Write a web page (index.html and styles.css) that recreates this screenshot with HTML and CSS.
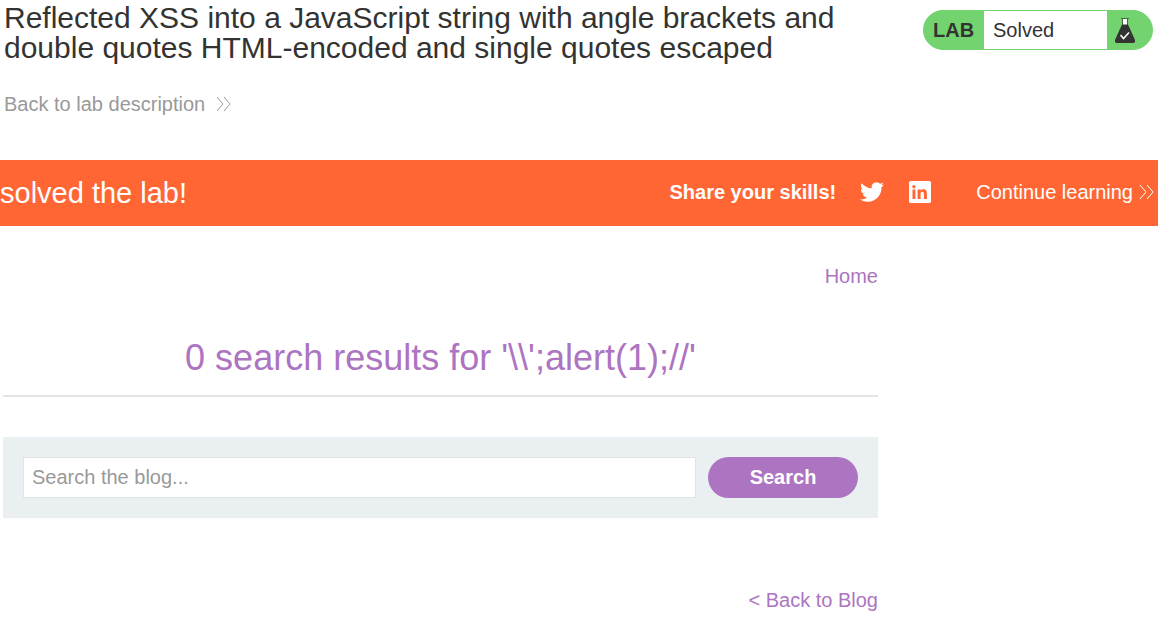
FILE: index.html
```html
<!DOCTYPE html>
<html lang="en">
<head>
<meta charset="utf-8">
<title>Reflected XSS into a JavaScript string</title>
<link rel="stylesheet" href="styles.css">
</head>
<body>
<header class="lab-header">
  <div class="lab-title">
    <h2 class="title">Reflected XSS into a JavaScript string with angle brackets and double quotes HTML-encoded and single quotes escaped</h2>
    <a class="back-link" href="#">Back to lab description
      <svg class="chevrons" viewBox="0 0 15 16" aria-hidden="true"><path d="M1 1l6 7-6 7M8 1l6 7-6 7"/></svg>
    </a>
  </div>
  <div class="lab-status">
    <span class="status-label">LAB</span>
    <p class="status-text">Solved</p>
    <span class="status-icon">
      <svg class="flask" viewBox="0 0 20 25" aria-hidden="true">
        <path fill="#fff" d="M8 1h4v6H8z"/>
        <path fill="#333332" opacity=".7" d="M6 0h8v1h-1v6h-1V1H8v6H7V1H6z"/>
        <path fill="#333332" d="M7 6.500h6l7 15.500q.400 3-2 3H2q-2.400 0-2-3z"/>
        <path fill="none" stroke="#fff" stroke-width="1.500" d="M5.500 17l3 3.500 5.500-6"/>
      </svg>
    </span>
  </div>
</header>
<section class="banner">
  <h4 class="banner-text">solved the lab!</h4>
  <div class="banner-actions">
    <span class="share">Share your skills!</span>
    <a class="social" href="#" aria-label="Twitter"><svg viewBox="0 0 24 24"><path d="M23.950 4.570a10 10 0 0 1-2.820.770 4.960 4.960 0 0 0 2.160-2.720c-.950.550-2 .950-3.130 1.180a4.920 4.920 0 0 0-8.380 4.480C7.690 8.090 4.070 6.130 1.640 3.160a4.820 4.820 0 0 0-.670 2.480c0 1.710.870 3.210 2.190 4.100a4.900 4.900 0 0 1-2.230-.620v.060a4.920 4.920 0 0 0 3.950 4.830 5 5 0 0 1-2.210.080 4.940 4.940 0 0 0 4.600 3.420A9.870 9.870 0 0 1 0 19.540a13.990 13.990 0 0 0 7.550 2.210c9.050 0 14-7.500 14-13.980 0-.210 0-.420-.020-.630a9.940 9.940 0 0 0 2.420-2.570z"/></svg></a>
    <a class="social" href="#" aria-label="LinkedIn"><svg viewBox="0 0 24 24"><path fill-rule="evenodd" d="M2.500 1h19q1.500 0 1.500 1.500v19q0 1.500-1.500 1.500h-19Q1 23 1 21.500v-19Q1 1 2.500 1zM4.500 9.500v9.500h2.900V9.500zM5.950 5a1.700 1.700 0 1 0 0 3.400 1.700 1.700 0 0 0 0-3.400zM9.600 9.500V19h3v-4.700c0-1.300.300-2.500 1.800-2.500s1.500 1.400 1.500 2.500V19h3v-5.200c0-2.600-.600-4.500-3.600-4.500-1.400 0-2.300.700-2.700 1.500V9.500z"/></svg></a>
    <a class="continue" href="#">Continue learning
      <svg class="chevrons" viewBox="0 0 15 16" aria-hidden="true"><path d="M1 1l6 7-6 7M8 1l6 7-6 7"/></svg>
    </a>
  </div>
</section>
<main class="content">
  <nav class="top-nav"><a href="#">Home</a></nav>
  <h1 class="results">0 search results for '\\';alert(1);//'</h1>
  <form class="search" onsubmit="return false">
    <input class="search-input" type="text" placeholder="Search the blog..." aria-label="Search the blog">
    <button class="search-button" type="submit">Search</button>
  </form>
  <div class="blog-link"><a href="#">&lt; Back to Blog</a></div>
</main>
</body>
</html>
```

FILE: styles.css
```css
* { box-sizing: border-box; }
body {
  margin: 0;
  background: #fff;
  color: #333332;
  font: 20px/24px "Liberation Sans", Arial, sans-serif;
}
a { color: inherit; text-decoration: none; }
h1, h2, h4, p { margin: 0; font-weight: 400; }
.lab-header {
  display: flex;
  justify-content: space-between;
  align-items: flex-start;
  padding: 3px 5px 44px 4px;
}
.lab-title { max-width: 860px; }
.title { font-size: 30px; line-height: 30px; }
.back-link {
  display: inline-flex;
  align-items: center;
  gap: 11px;
  margin-top: 29px;
  color: #999;
}
.chevrons {
  width: 15px;
  height: 16px;
  fill: none;
  stroke: currentColor;
  stroke-width: 1;
}
.lab-status {
  display: flex;
  width: 230px;
  height: 40px;
  margin-top: 7px;
  border: 1px solid #72d36f;
  border-radius: 20px;
  background: #72d36f;
  overflow: hidden;
  line-height: 38px;
}
.status-label { width: 60px; padding-left: 9px; font-weight: 700; }
.status-text { flex: 1; padding-left: 9px; background: #fff; }
.status-icon { display: flex; width: 45px; padding: 7px 0 0 8px; }
.flask { width: 20px; height: 25px; }
.banner {
  display: flex;
  justify-content: space-between;
  align-items: center;
  min-height: 66px;
  padding-right: 4px;
  background: #ff6633;
  color: #fff;
}
.banner-text { font-size: 29px; line-height: 34px; }
.banner-actions { display: flex; align-items: center; padding-bottom: 2px; }
.share { margin-right: 24px; font-weight: 700; }
.social { display: flex; width: 24px; height: 24px; margin-right: 24px; }
.social svg { width: 24px; height: 24px; fill: currentColor; }
.continue { display: inline-flex; align-items: center; gap: 6px; margin-left: 20px; }
.content { max-width: 878px; padding: 38px 0 16px 3px; }
.top-nav, .blog-link { color: #ad74c1; text-align: right; }
.results {
  margin-top: 48px;
  padding-bottom: 15px;
  border-bottom: 2px solid #e5e5e5;
  color: #ad74c1;
  font-size: 36px;
  line-height: 44px;
  text-align: center;
}
.search {
  display: flex;
  gap: 12px;
  margin: 40px 0 70px;
  padding: 20px;
  background: #eaeff2;
}
.search-input {
  flex: 1;
  min-width: 0;
  height: 41px;
  padding: 0 8px;
  border: 1px solid #e0e4e6;
  background: #fff;
  color: #333332;
  font: inherit;
}
.search-input::placeholder { color: #999; opacity: 1; }
.search-button {
  width: 150px;
  height: 41px;
  padding: 0 0 2px;
  border: 0;
  border-radius: 21px;
  background: #ad74c1;
  color: #fff;
  font: inherit;
  font-weight: 700;
}
```
